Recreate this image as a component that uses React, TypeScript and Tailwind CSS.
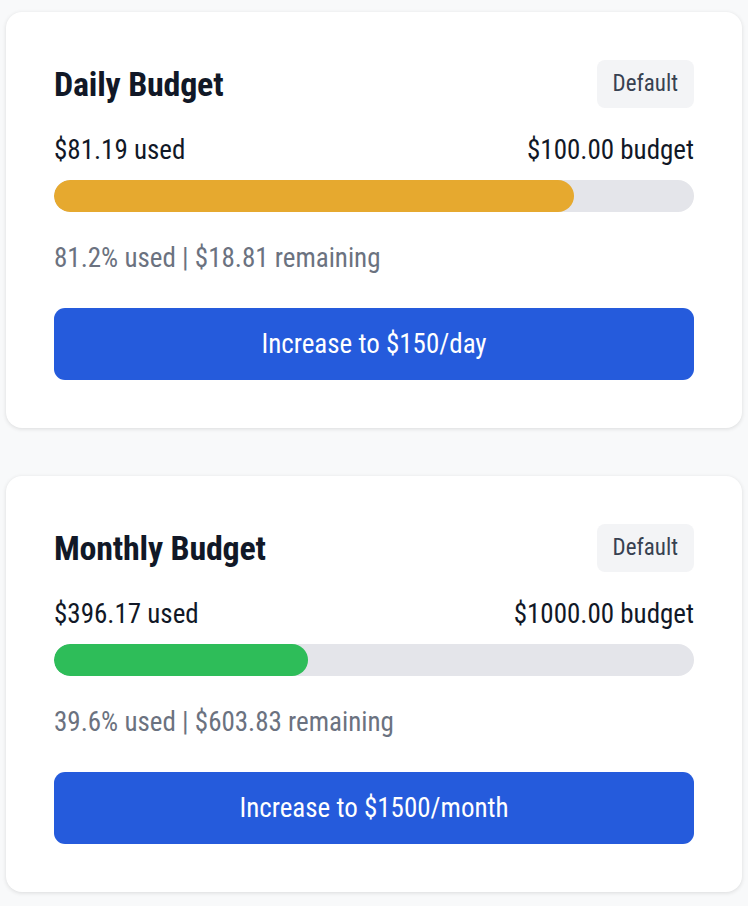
// Budget cards - daily and monthly spend with progress and an increase action

interface Budget {
  title: string;
  used: number;
  limit: number;
  barColor: string;
  increaseLabel: string;
}

const budgets: Budget[] = [
  {
    title: 'Daily Budget',
    used: 81.19,
    limit: 100,
    barColor: 'bg-[#e6a92f]',
    increaseLabel: 'Increase to $150/day',
  },
  {
    title: 'Monthly Budget',
    used: 396.17,
    limit: 1000,
    barColor: 'bg-[#2ebd59]',
    increaseLabel: 'Increase to $1500/month',
  },
];

function BudgetCard({ budget }: { budget: Budget }) {
  const pct = (budget.used / budget.limit) * 100;
  const remaining = budget.limit - budget.used;

  return (
    <div className="bg-white rounded-2xl shadow-[0_1px_4px_rgba(0,0,0,0.12)] p-12">
      {/* Header */}
      <div className="flex items-center justify-between h-12">
        <h2 className="text-[34px] font-bold text-[#111827] leading-[48px] tracking-[-0.2px]">
          {budget.title}
        </h2>
        <span className="h-12 px-4 flex items-center rounded-lg bg-[#f3f4f6] text-[23px] text-[#374151]">
          Default
        </span>
      </div>

      {/* Amounts */}
      <div className="mt-[22px] flex justify-between text-[27px] leading-[40px] text-[#111827]">
        <span>${budget.used.toFixed(2)} used</span>
        <span>${budget.limit.toFixed(2)} budget</span>
      </div>

      {/* Progress */}
      <div className="mt-[10px] h-8 rounded-full bg-[#e4e5ea] overflow-hidden">
        <div
          className={`h-full rounded-full ${budget.barColor}`}
          style={{ width: `${pct}%` }}
        />
      </div>

      <p className="mt-[26px] text-[27px] leading-[40px] text-[#6b7280]">
        {pct.toFixed(1)}% used | ${remaining.toFixed(2)} remaining
      </p>

      <button
        type="button"
        className="mt-[30px] w-full h-[72px] rounded-[11px] bg-[#255bdc] text-white text-[27px] font-normal"
      >
        {budget.increaseLabel}
      </button>
    </div>
  );
}

export default function App() {
  return (
    <div
      className="min-h-screen bg-[#f8f9fa] px-[6px] py-3 flex flex-col gap-12"
      style={{ fontFamily: '"Roboto Condensed", Roboto, sans-serif' }}
    >
      {budgets.map((b) => (
        <BudgetCard key={b.title} budget={b} />
      ))}
    </div>
  );
}
